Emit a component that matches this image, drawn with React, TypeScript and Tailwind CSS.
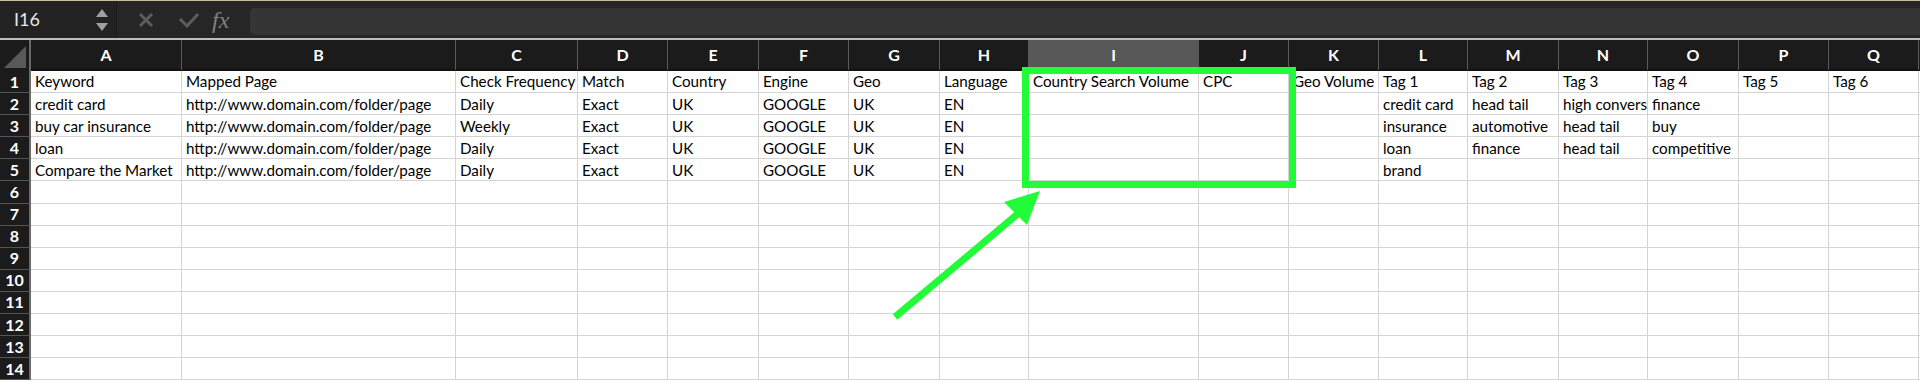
import React from "react";

const cols = ["A","B","C","D","E","F","G","H","I","J","K","L","M","N","O","P","Q","R"];
const widths = [151,274,122,90,91,90,91,89,170,90,90,89,91,89,91,90,90,10];

const data: string[][] = [
  ["Keyword","Mapped Page","Check Frequency","Match","Country","Engine","Geo","Language","Country Search Volume","CPC","Geo Volume","Tag 1","Tag 2","Tag 3","Tag 4","Tag 5","Tag 6",""],
  ["credit card","http://www.domain.com/folder/page","Daily","Exact","UK","GOOGLE","UK","EN","","","","credit card","head tail","high conversion","finance","","",""],
  ["buy car insurance","http://www.domain.com/folder/page","Weekly","Exact","UK","GOOGLE","UK","EN","","","","insurance","automotive","head tail","buy","","",""],
  ["loan","http://www.domain.com/folder/page","Daily","Exact","UK","GOOGLE","UK","EN","","","","loan","finance","head tail","competitive","","",""],
  ["Compare the Market","http://www.domain.com/folder/page","Daily","Exact","UK","GOOGLE","UK","EN","","","","brand","","","","","",""],
];

const font = { fontFamily: "Lato, 'Open Sans', 'Liberation Sans', sans-serif" };

export default function App() {
  const rows = Array.from({ length: 14 }, (_, i) => data[i] || Array(18).fill(""));
  return (
    <div className="relative w-[1920px] h-[382px] overflow-hidden bg-white" style={font}>
      <div className="h-[1px] bg-[#cbbd9f]" />
      {/* toolbar */}
      <div className="flex h-[37px] bg-[#262626]">
        <div className="relative flex w-[117px] items-center bg-[#222222] pl-[14px] text-[18px] text-[#e6e6e6] border-r border-[#1a1a1a]">
          I16
          <div className="absolute right-[8px] top-[8px] flex flex-col items-center gap-[6px]">
            <div className="h-0 w-0 border-x-[6px] border-b-[8px] border-x-transparent border-b-[#a0a0a0]" />
            <div className="h-0 w-0 border-x-[6px] border-t-[8px] border-x-transparent border-t-[#a0a0a0]" />
          </div>
        </div>
        <div className="flex w-[133px] items-center">
          <svg width="16" height="16" viewBox="0 0 16 16" className="ml-[21px]">
            <path d="M2 2 L14 14 M14 2 L2 14" stroke="#5c5c5c" strokeWidth="3" />
          </svg>
          <svg width="22" height="16" viewBox="0 0 22 16" className="ml-[24px]">
            <path d="M2 7 L9 14 L20 2" stroke="#5c5c5c" strokeWidth="3" fill="none" />
          </svg>
          <span className="ml-[12px] text-[24px] italic text-[#808080]" style={{ fontFamily: "'Liberation Serif', 'DejaVu Serif', serif" }}>fx</span>
        </div>
        <div className="mt-[7px] h-[27px] flex-1 rounded-l-[5px] bg-[#353535]" />
      </div>
      <div className="h-[2px] bg-[#bdbdbd]" />
      {/* grid */}
      <div className="flex flex-col">
        <div className="flex h-[31px] bg-[#1b1b1b]">
          <div className="relative w-[31px] shrink-0 border-r-2 border-[#6b6b6b]">
            <svg className="absolute bottom-[3px] right-[3px]" width="22" height="22" viewBox="0 0 22 22">
              <path d="M22 0 L22 22 L0 22 Z" fill="#595959" />
            </svg>
          </div>
          {cols.map((c, i) => (
            <div
              key={c}
              className={`flex shrink-0 items-center justify-center border-r border-[#5a5a5a] border-b-2 border-b-[#111] text-[16px] font-bold text-white ${c === "I" ? "bg-[#585858]" : ""}`}
              style={{ width: widths[i] }}
            >
              {c === "R" ? "" : c}
            </div>
          ))}
        </div>
        {rows.map((r, ri) => (
          <div key={ri} className="flex h-[22.1px]">
            <div className="flex w-[31px] shrink-0 items-center justify-center border-r-2 border-[#6b6b6b] border-b border-b-[#555] bg-[#1b1b1b] text-[16px] font-bold text-white">
              {ri + 1}
            </div>
            {r.map((v, ci) => (
              <div
                key={ci}
                className="flex shrink-0 items-center overflow-hidden whitespace-nowrap border-r border-b border-[#d4d4d4] pl-[4px] pt-[1px] text-[15.2px] leading-none text-black"
                style={{ width: widths[ci] }}
              >
                {v}
              </div>
            ))}
          </div>
        ))}
      </div>
      {/* annotation overlay */}
      <div className="pointer-events-none absolute left-[1022px] top-[67px] h-[121px] w-[274px] border-[7px] border-[#22fb38]" />
      <svg className="pointer-events-none absolute left-0 top-0" width="1920" height="382">
        <line x1="895" y1="317" x2="1020" y2="212" stroke="#22fb38" strokeWidth="7" />
        <polygon points="1040,191 1004,202 1027,225" fill="#22fb38" />
      </svg>
    </div>
  );
}
